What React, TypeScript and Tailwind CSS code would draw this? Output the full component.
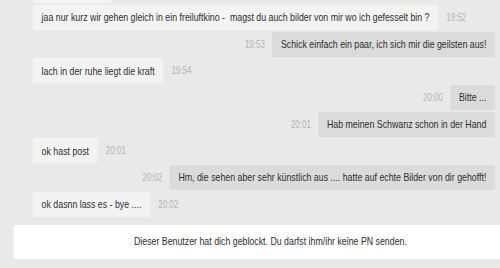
import React from 'react'

type Msg = { id: number; side: 'left' | 'right'; text: string; time: string }

const messages: Msg[] = [
  { id: 1, side: 'left', text: 'jaa nur kurz wir gehen gleich in ein freiluftkino -  magst du auch bilder von mir wo ich gefesselt bin ?', time: '19:52' },
  { id: 2, side: 'right', text: 'Schick einfach ein paar, ich sich mir die geilsten aus!', time: '19:53' },
  { id: 3, side: 'left', text: 'lach in der ruhe liegt die kraft', time: '19:54' },
  { id: 4, side: 'right', text: 'Bitte ...', time: '20:00' },
  { id: 5, side: 'right', text: 'Hab meinen Schwanz schon in der Hand', time: '20:01' },
  { id: 6, side: 'left', text: 'ok hast post', time: '20:01' },
  { id: 7, side: 'right', text: 'Hm, die sehen aber sehr künstlich aus .... hatte auf echte Bilder von dir gehofft!', time: '20:02' },
  { id: 8, side: 'left', text: 'ok dasnn lass es - bye ....', time: '20:02' },
]

function Bubble({ msg }: { msg: Msg }) {
  const left = msg.side === 'left'
  return (
    <div className={left ? 'flex items-center gap-[10px] pl-[41px]' : 'flex items-center justify-end gap-[9px] pr-[6px]'}>
      {!left && <span className="text-[10px] text-[#b4b4b4]">{msg.time}</span>}
      <div
        className={
          left
            ? 'flex h-[25px] items-center whitespace-pre rounded-[2px] bg-[#f3f3f3] px-[11px] text-[11px] text-[#2e2e2e]'
            : 'flex h-[25px] items-center whitespace-pre rounded-[2px] bg-[#dbdbdb] px-[11px] text-[11px] text-[#2e2e2e]'
        }
      >
        {msg.text}
      </div>
      {left && <span className="text-[10px] text-[#b4b4b4]">{msg.time}</span>}
    </div>
  )
}

export default function App() {
  return (
    <div className="h-[268px] w-[500px] overflow-hidden bg-[#e9e9e9]">
      {/* the chat is laid out wide and squeezed to match the narrow look of the original */}
      <div
        className="w-[625px] origin-top-left scale-x-80"
        style={{ fontFamily: '"Liberation Sans", Arial, sans-serif' }}
      >
        <div className="-mt-[21.67px] flex flex-col gap-[1.67px]">
          {/* previous message, scrolled mostly out of view */}
          <div className="pl-[41px]">
            <div className="h-[25px] w-[99px] rounded-[2px] bg-[#f3f3f3]" />
          </div>
          {messages.map((m) => (
            <Bubble key={m.id} msg={m} />
          ))}
        </div>
        <div className="ml-[17px] mt-[8px] flex h-[34px] w-[642px] items-center justify-center rounded-[4px] bg-white text-[11px] text-[#2e2e2e]">
          Dieser Benutzer hat dich geblockt. Du darfst ihm/ihr keine PN senden.
        </div>
      </div>
    </div>
  )
}
